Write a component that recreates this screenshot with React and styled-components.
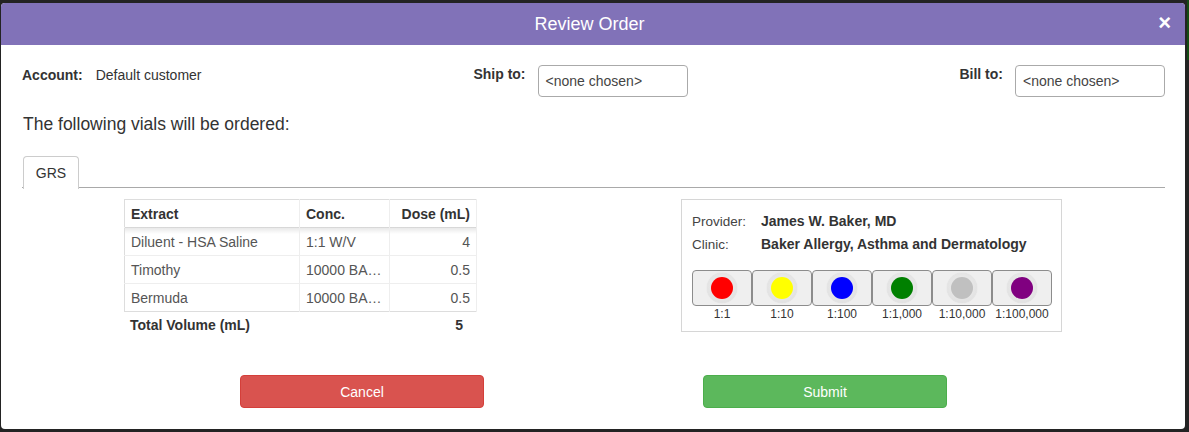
import React from "react";
import styled, { createGlobalStyle } from "styled-components";

const Global = createGlobalStyle`
  html, body { margin: 0; padding: 0; }
  body {
    background: #232323;
    font-family: "Liberation Sans", Arial, sans-serif;
    color: #333;
    width: 1189px;
    height: 432px;
    overflow: hidden;
  }
`;

const Backdrop = styled.div`
  position: relative;
  width: 1189px;
  height: 432px;
  padding: 3px 4px 3px 1px;
  box-sizing: border-box;
`;

const GreenEdge = styled.div`
  position: absolute;
  right: 0;
  top: 0;
  width: 2px;
  height: 60px;
  background: #134d13;
`;

const Modal = styled.div`
  width: 1184px;
  height: 426px;
  background: #fff;
  border-radius: 4px;
  overflow: hidden;
  display: flex;
  flex-direction: column;
`;

const Header = styled.div`
  height: 42px;
  background: #8172b8;
  color: #fff;
  display: flex;
  align-items: center;
  justify-content: center;
  position: relative;
  flex-shrink: 0;
`;

const Title = styled.h4`
  margin: 0 7px 0 0;
  font-size: 18px;
  font-weight: normal;
`;

const Close = styled.span`
  position: absolute;
  right: 14px;
  top: 9px;
  font-size: 22px;
  font-weight: bold;
  line-height: 22px;
  color: #fff;
`;

const Body = styled.div`
  padding: 20px 20px 0 21px;
  display: flex;
  flex-direction: column;
`;

const TopRow = styled.div`
  display: flex;
  justify-content: space-between;
  align-items: flex-start;
`;

const Field = styled.div`
  display: flex;
  align-items: flex-start;
  gap: ${(p) => p.$gap || 12}px;
`;

const Label = styled.span`
  font-size: 14px;
  font-weight: bold;
  line-height: 18px;
  margin-top: ${(p) => p.$top || 0}px;
`;

const Value = styled.span`
  font-size: 14px;
  line-height: 18px;
  margin-top: 1px;
  color: #333;
`;

const SelectBox = styled.div`
  height: 30px;
  border: 1px solid #aaa;
  border-radius: 4px;
  font-size: 14px;
  color: #444;
  display: flex;
  align-items: center;
  padding-left: 7px;
  box-sizing: content-box;
  width: 141px;
`;

const Lead = styled.p`
  margin: 17px 0 0 1px;
  font-size: 17.5px;
  line-height: 20px;
  color: #333;
`;

const Tabs = styled.div`
  margin-top: 22px;
  border-bottom: 1px solid #a9a9a9;
  display: flex;
  height: 31px;
`;

const Tab = styled.div`
  width: 54px;
  height: 31px;
  border: 1px solid #ccc;
  border-bottom: none;
  border-radius: 4px 4px 0 0;
  background: #fff;
  font-size: 14px;
  color: #333;
  display: flex;
  align-items: center;
  justify-content: center;
  margin-bottom: -1px;
  padding-bottom: 1px;
  box-sizing: content-box;
  margin-left: 1px;
`;

const Content = styled.div`
  display: flex;
  align-items: flex-start;
  margin-top: 11px;
  padding-left: 102px;
`;

const TableWrap = styled.div`
  width: 352px;
`;

const Table = styled.table`
  width: 352px;
  border-collapse: collapse;
  table-layout: fixed;
  border: 1px solid #ddd;
  font-size: 14px;
`;

const Th = styled.th`
  height: 27px;
  padding: 0 6px;
  text-align: ${(p) => p.$align || "left"};
  font-weight: bold;
  color: #333;
  border-right: 1px solid #eee;
  position: relative;

  &::after {
    content: "";
    position: absolute;
    left: 0;
    right: 0;
    bottom: -7px;
    height: 7px;
    background: linear-gradient(rgba(0, 0, 0, 0.1), rgba(0, 0, 0, 0));
    pointer-events: none;
  }
`;

const Td = styled.td`
  height: 27px;
  padding: 0 6px;
  text-align: ${(p) => p.$align || "left"};
  color: #555;
  border-top: 1px solid #eee;
  border-right: 1px solid #eee;
  white-space: nowrap;
  overflow: hidden;
  text-overflow: ellipsis;
`;

const TotalRow = styled.div`
  display: flex;
  justify-content: space-between;
  height: 26px;
  align-items: center;
  padding: 0 13px 0 6px;
  font-size: 14px;
  font-weight: bold;
  color: #333;
`;

const Panel = styled.div`
  width: 359px;
  margin-left: 205px;
  border: 1px solid #d6d6d6;
  padding: 10px 10px 9px 10px;
`;

const InfoGrid = styled.div`
  display: grid;
  grid-template-columns: 69px auto;
  font-size: 14px;
  line-height: 23px;
`;

const InfoLabel = styled.span`
  color: #444;
  font-size: 13.5px;
`;

const InfoValue = styled.span`
  font-weight: bold;
  color: #333;
`;

const Vials = styled.div`
  display: flex;
  margin-top: 14px;
`;

const VialCol = styled.div`
  width: 60px;
  display: flex;
  flex-direction: column;
  align-items: center;
`;

const VialButton = styled.div`
  width: 60px;
  height: 36px;
  box-sizing: border-box;
  border: 1px solid #8c8c8c;
  border-radius: 4px;
  background: #efefef;
  display: flex;
  align-items: center;
  justify-content: center;
`;

const Ring = styled.div`
  width: 30px;
  height: 30px;
  border-radius: 50%;
  background: radial-gradient(circle at 50% 45%, #f2f2f2 0%, #e2e2e2 72%, #cdcdcd 100%);
  box-shadow: 0 0 1px rgba(0, 0, 0, 0.15);
  display: flex;
  align-items: center;
  justify-content: center;
`;

const Dot = styled.div`
  width: 22px;
  height: 22px;
  border-radius: 50%;
  background: ${(p) => p.$color};
`;

const VialLabel = styled.span`
  font-size: 12px;
  line-height: 16px;
  color: #333;
`;

const Actions = styled.div`
  display: flex;
  gap: 219px;
  margin-top: 37px;
  padding-left: 218px;
`;

const Button = styled.button`
  width: 244px;
  height: 33px;
  border-radius: 4px;
  border: 1px solid ${(p) => (p.$variant === "danger" ? "#d43f3a" : "#4cae4c")};
  background: ${(p) => (p.$variant === "danger" ? "#d9534f" : "#5cb85c")};
  color: #fff;
  font-family: "Liberation Sans", Arial, sans-serif;
  font-size: 14px;
  cursor: pointer;
`;

const rows = [
  { extract: "Diluent - HSA Saline", conc: "1:1 W/V", dose: "4" },
  { extract: "Timothy", conc: "10000 BAU/mL", dose: "0.5" },
  { extract: "Bermuda", conc: "10000 BAU/mL", dose: "0.5" },
];

const vials = [
  { color: "#ff0000", label: "1:1" },
  { color: "#ffff00", label: "1:10" },
  { color: "#0000ff", label: "1:100" },
  { color: "#008000", label: "1:1,000" },
  { color: "#c0c0c0", label: "1:10,000" },
  { color: "#800080", label: "1:100,000" },
];

export default function App() {
  return (
    <>
      <Global />
      <Backdrop>
        <GreenEdge />
        <Modal>
          <Header>
            <Title>Review Order</Title>
            <Close>×</Close>
          </Header>
          <Body>
            <TopRow>
              <Field $gap={13}>
                <Label $top={1}>Account:</Label>
                <Value>Default customer</Value>
              </Field>
              <Field>
                <Label $top={0}>Ship to:</Label>
                <SelectBox>&lt;none chosen&gt;</SelectBox>
              </Field>
              <Field>
                <Label $top={0}>Bill to:</Label>
                <SelectBox>&lt;none chosen&gt;</SelectBox>
              </Field>
            </TopRow>
            <Lead>The following vials will be ordered:</Lead>
            <Tabs>
              <Tab>GRS</Tab>
            </Tabs>
            <Content>
              <TableWrap>
                <Table>
                  <colgroup>
                    <col style={{ width: 175 }} />
                    <col style={{ width: 90 }} />
                    <col style={{ width: 87 }} />
                  </colgroup>
                  <thead>
                    <tr>
                      <Th>Extract</Th>
                      <Th>Conc.</Th>
                      <Th $align="right">Dose (mL)</Th>
                    </tr>
                  </thead>
                  <tbody>
                    {rows.map((r) => (
                      <tr key={r.extract}>
                        <Td>{r.extract}</Td>
                        <Td title={r.conc}>{r.conc}</Td>
                        <Td $align="right">{r.dose}</Td>
                      </tr>
                    ))}
                  </tbody>
                </Table>
                <TotalRow>
                  <span>Total Volume (mL)</span>
                  <span>5</span>
                </TotalRow>
              </TableWrap>
              <Panel>
                <InfoGrid>
                  <InfoLabel>Provider:</InfoLabel>
                  <InfoValue>James W. Baker, MD</InfoValue>
                  <InfoLabel>Clinic:</InfoLabel>
                  <InfoValue>Baker Allergy, Asthma and Dermatology</InfoValue>
                </InfoGrid>
                <Vials>
                  {vials.map((v) => (
                    <VialCol key={v.label}>
                      <VialButton>
                        <Ring>
                          <Dot $color={v.color} />
                        </Ring>
                      </VialButton>
                      <VialLabel>{v.label}</VialLabel>
                    </VialCol>
                  ))}
                </Vials>
              </Panel>
            </Content>
            <Actions>
              <Button $variant="danger">Cancel</Button>
              <Button $variant="success">Submit</Button>
            </Actions>
          </Body>
        </Modal>
      </Backdrop>
    </>
  );
}
